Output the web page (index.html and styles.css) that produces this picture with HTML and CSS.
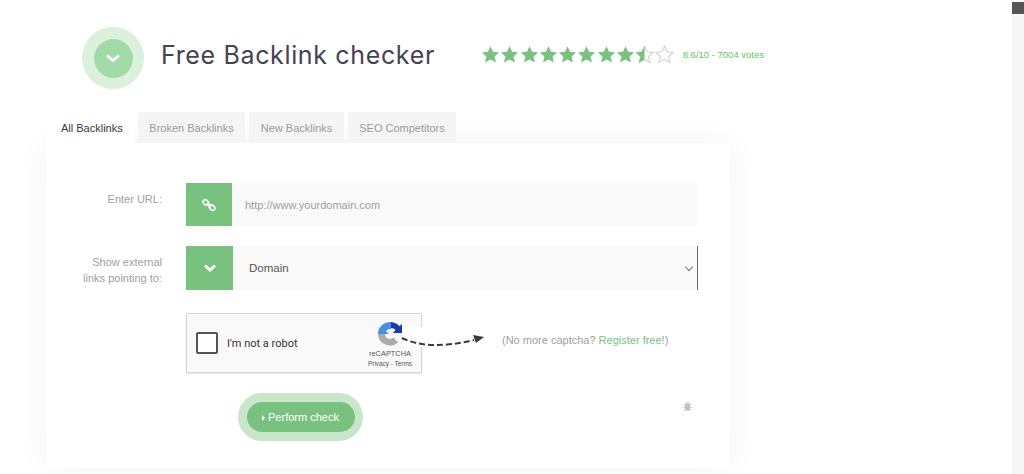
FILE: index.html
```html
<!doctype html>
<html lang="en">
<head>
  <meta charset="UTF-8">
  <title>Free Backlink checker</title>
  <meta name="viewport" content="width=device-width, initial-scale=1.0">
  <link rel="stylesheet" href="styles.css">
</head>
<body>

  <svg class="defs" width="0" height="0">
    <defs>
      <path id="star" d="M10 1.2l2.7 5.9 6.4.7-4.8 4.3 1.4 6.3L10 15.2l-5.7 3.2 1.4-6.3L.9 7.8l6.4-.7z"/>
      <clipPath id="halfClip"><rect x="0" y="0" width="10" height="20"/></clipPath>
    </defs>
  </svg>

  <div class="page">
    <div class="header">
      <div class="logo-ring">
        <div class="logo-dot">
          <svg width="16" height="12" viewBox="0 0 16 12"><path class="chev" d="M2 3.500l6 5 6-5"/></svg>
        </div>
      </div>
      <h1>Free Backlink checker</h1>
      <div class="stars">
        <svg class="star" viewBox="0 0 20 20"><use href="#star"/></svg>
        <svg class="star" viewBox="0 0 20 20"><use href="#star"/></svg>
        <svg class="star" viewBox="0 0 20 20"><use href="#star"/></svg>
        <svg class="star" viewBox="0 0 20 20"><use href="#star"/></svg>
        <svg class="star" viewBox="0 0 20 20"><use href="#star"/></svg>
        <svg class="star" viewBox="0 0 20 20"><use href="#star"/></svg>
        <svg class="star" viewBox="0 0 20 20"><use href="#star"/></svg>
        <svg class="star" viewBox="0 0 20 20"><use href="#star"/></svg>
        <svg class="star empty" viewBox="0 0 20 20"><use href="#star"/><use class="half" href="#star" clip-path="url(#halfClip)"/></svg>
        <svg class="star empty" viewBox="0 0 20 20"><use href="#star"/></svg>
      </div>
      <span class="votes">8.6/10 - 7004 votes</span>
    </div>

    <div class="tabs">
      <a class="tab active">All Backlinks</a>
      <a class="tab">Broken Backlinks</a>
      <a class="tab">New Backlinks</a>
      <a class="tab">SEO Competitors</a>
    </div>

    <div class="card">
      <div class="form-row">
        <label class="label">Enter URL:</label>
        <div class="addon">
          <svg width="14" height="14" viewBox="0 0 14 14"><path class="link" d="M3.200 1.600a2.200 2.200 0 0 0-1.600 3.700l1.300 1.300a2.200 2.200 0 0 0 3.200 0M10.800 12.400a2.200 2.200 0 0 0 1.600-3.700l-1.300-1.300a2.200 2.200 0 0 0-3.200 0M3.200 1.600a2.200 2.200 0 0 1 1.600.6l1.300 1.300a2.200 2.200 0 0 1 0 3.100M10.800 12.400a2.200 2.200 0 0 1-1.600-.6L7.900 10.500a2.200 2.200 0 0 1 0-3.100M5 5l4 4"/></svg>
        </div>
        <input class="field" type="text" placeholder="http://www.yourdomain.com">
      </div>

      <div class="form-row row-select">
        <label class="label">Show external<br>links pointing to:</label>
        <div class="addon addon-wide">
          <svg width="16" height="12" viewBox="0 0 16 12"><path class="chev" d="M3 3.500l5 4.500 5-4.500"/></svg>
        </div>
        <div class="select-wrap">
          <select class="field field-select">
            <option>Domain</option>
          </select>
        </div>
      </div>

      <div class="captcha-row">
        <div class="captcha">
          <span class="checkbox"></span>
          <span class="robot">I'm not a robot</span>
          <div class="badge">
            <svg width="26" height="26" viewBox="0 0 26 26">
              <path fill="#ababab" d="M1 13h7a5 5 0 0 0 8.500 3.500l4.500 5A12 12 0 0 1 1 13z"/>
              <path fill="#4a90e2" d="M1 12A12 12 0 0 1 15 1.200L14 8a5 5 0 0 0-5 2l3 3H1z"/>
              <path fill="#1c3aa9" d="M14 1a12 12 0 0 1 8.500 4.300L25 3v9h-9l2.500-3a6 6 0 0 0-4.500-2z"/>
            </svg>
            <span class="badge-name">reCAPTCHA</span>
            <span class="badge-links">Privacy - Terms</span>
          </div>
          <svg class="arrow" width="92" height="26" viewBox="0 0 92 26">
            <path class="arrow-bg" d="M3 0h24v20H3z"/>
            <path class="arrow-line" d="M2 11c18 9 44 9 72 2"/>
            <path class="arrow-head" d="M73 8l11 2-8 6z"/>
          </svg>
        </div>
        <p class="no-captcha">(No more captcha? <a>Register free!</a>)</p>
      </div>

      <div class="submit-row">
        <div class="btn-ring">
          <button class="btn" type="button"><span class="caret"></span>Perform check</button>
        </div>
        <svg class="bug" width="11" height="11" viewBox="0 0 11 11">
          <rect x="3" y="2.500" width="5" height="7" fill="#c2bec1"/>
          <path d="M4 1.500h3M1 3l2 1.500M10 3L8 4.500M.5 6.500H3M10.500 6.500H8M1 10l2-1.500M10 10L8 8.500" stroke="#d8d5d8" fill="none"/>
        </svg>
      </div>
    </div>
  </div>

  <div class="scrollbar"><div class="scroll-thumb"></div></div>

</body>
</html>
```

FILE: styles.css
```css
* {
  box-sizing: border-box;
}
html, body {
  height: 474px;
  overflow: hidden;
}
body {
  margin: 0;
  display: flex;
  background: #fff;
  font-family: "Liberation Sans", Arial, sans-serif;
  color: #333;
}
.defs {
  position: absolute;
}
.page {
  width: 1012px;
  flex: none;
  padding: 27px 0 0 46px;
}

/* header */
.header {
  display: flex;
  align-items: center;
  height: 62px;
  padding-left: 36px;
}
.logo-ring {
  width: 62px;
  height: 62px;
  border-radius: 50%;
  background: #dcf0de;
  display: flex;
  align-items: center;
  justify-content: center;
}
.logo-dot {
  width: 39px;
  height: 39px;
  border-radius: 50%;
  background: #a3dba8;
  display: flex;
  align-items: center;
  justify-content: center;
}
.chev {
  fill: none;
  stroke: #fff;
  stroke-width: 2.8;
}
h1 {
  margin: 0 0 0 17px;
  width: 320px;
  font-family: Inter, sans-serif;
  font-size: 25px;
  font-weight: 400;
  letter-spacing: .65px;
  color: #444450;
  position: relative;
  top: -3px;
}
.stars {
  display: flex;
  gap: .3px;
  position: relative;
  top: -4px;
}
.star {
  width: 19px;
  height: 19px;
  fill: #78c17f;
}
.star.empty {
  fill: #fff;
  stroke: #d2d2d2;
  stroke-width: 1.2;
}
.star .half {
  fill: #78c17f;
  stroke: none;
}
.votes {
  margin-left: 9px;
  font-size: 9.5px;
  color: #5fc45f;
  position: relative;
  top: -4px;
}

/* tabs */
.tabs {
  display: flex;
  gap: 4px;
  margin-top: 23px;
  height: 31px;
  position: relative;
  z-index: 1;
}
.tab {
  display: flex;
  align-items: center;
  justify-content: center;
  height: 31px;
  font-size: 11px;
  color: #9a9a9a;
  background: #f5f5f5;
}
.tab:nth-child(2) { width: 107px; }
.tab:nth-child(3) { width: 95px; }
.tab:nth-child(4) { width: 108px; }
.tab.active {
  width: 88px;
  margin-right: 0;
  padding-left: 15px;
  justify-content: flex-start;
  color: #3a3a3a;
  background: #fff;
}

/* card */
.card {
  width: 684px;
  height: 325px;
  background: #fff;
  box-shadow: 0 0 30px rgba(0,0,0,0.05);
  padding-top: 40px;
}
.form-row {
  display: flex;
  height: 43px;
}
.row-select {
  margin-top: 20px;
  height: 44px;
}
.label {
  width: 116px;
  font-size: 11px;
  line-height: 16px;
  color: #a0a0a0;
  text-align: right;
  padding-top: 8px;
}
.addon {
  width: 46px;
  margin-left: 24px;
  background: #78c17f;
  display: flex;
  align-items: center;
  justify-content: center;
  flex: none;
}
.addon-wide {
  width: 47px;
}
.link {
  fill: none;
  stroke: #fff;
  stroke-width: 1.6;
}
.field {
  width: 465px;
  border: 0;
  outline: 0;
  background: #fafafa;
  padding: 0 0 0 13px;
  font-family: "Liberation Sans", Arial, sans-serif;
  font-size: 11px;
  color: #555;
}
.field::placeholder {
  color: #9d9d9d;
}
.select-wrap {
  width: 465px;
  position: relative;
}
.select-wrap::after {
  content: "";
  position: absolute;
  right: 6px;
  top: 18px;
  width: 5px;
  height: 5px;
  border-right: 1.5px solid #777;
  border-bottom: 1.5px solid #777;
  transform: rotate(45deg);
}
.field-select {
  width: 100%;
  height: 100%;
  appearance: none;
  padding-left: 16px;
  border-right: 1px solid #666;
  border-radius: 0;
  font-size: 11.5px;
}

/* captcha */
.captcha-row {
  display: flex;
  align-items: center;
  margin: 23px 0 0 140px;
}
.captcha {
  width: 236px;
  height: 60px;
  flex: none;
  position: relative;
  display: flex;
  align-items: center;
  background: #f9f9f9;
  border: 1px solid #d6d6d6;
  border-radius: 2px;
  box-shadow: 0 1px 2px rgba(0,0,0,0.1);
  padding-left: 9px;
}
.checkbox {
  width: 22px;
  height: 22px;
  border: 2px solid #555;
  border-radius: 2px;
  background: #fff;
}
.robot {
  margin-left: 9px;
  font-family: Roboto, sans-serif;
  font-size: 11px;
  color: #333;
}
.badge {
  position: absolute;
  right: 0;
  top: 7px;
  width: 62px;
  display: flex;
  flex-direction: column;
  align-items: center;
  color: #555;
}
.badge svg {
  margin-bottom: 2px;
}
.badge-name {
  font-size: 7.4px;
  line-height: 10px;
}
.badge-links {
  font-size: 6.4px;
  line-height: 10px;
}
.arrow {
  position: absolute;
  left: 213px;
  top: 13px;
}
.arrow-bg {
  fill: #fff;
}
.arrow-line {
  fill: none;
  stroke: #3a3a3a;
  stroke-width: 2;
  stroke-dasharray: 6 3;
}
.arrow-head {
  fill: #3a3a3a;
}
.no-captcha {
  margin: 0 0 6px 80px;
  font-size: 11px;
  color: #a0a0a0;
}
.no-captcha a {
  color: #78c17f;
}

/* submit */
.submit-row {
  display: flex;
  margin: 20px 0 0 192px;
  position: relative;
}
.btn-ring {
  width: 125px;
  height: 48px;
  border-radius: 24px;
  background: #c9e6cb;
  display: flex;
  align-items: center;
  justify-content: center;
}
.btn {
  width: 108px;
  height: 30px;
  border: 0;
  border-radius: 15px;
  background: #78c17f;
  color: #fff;
  font-family: "Liberation Sans", Arial, sans-serif;
  font-size: 11px;
  padding: 0;
}
.caret {
  display: inline-block;
  margin-right: 3px;
  border-left: 3px solid #fff;
  border-top: 3.5px solid transparent;
  border-bottom: 3.5px solid transparent;
}
.bug {
  margin: 8px 0 0 319px;
}

/* window scrollbar */
.scrollbar {
  flex: 1;
  background: #f6f6f6;
  padding-top: 2px;
}
.scroll-thumb {
  height: 12px;
  background: #555;
}
```
